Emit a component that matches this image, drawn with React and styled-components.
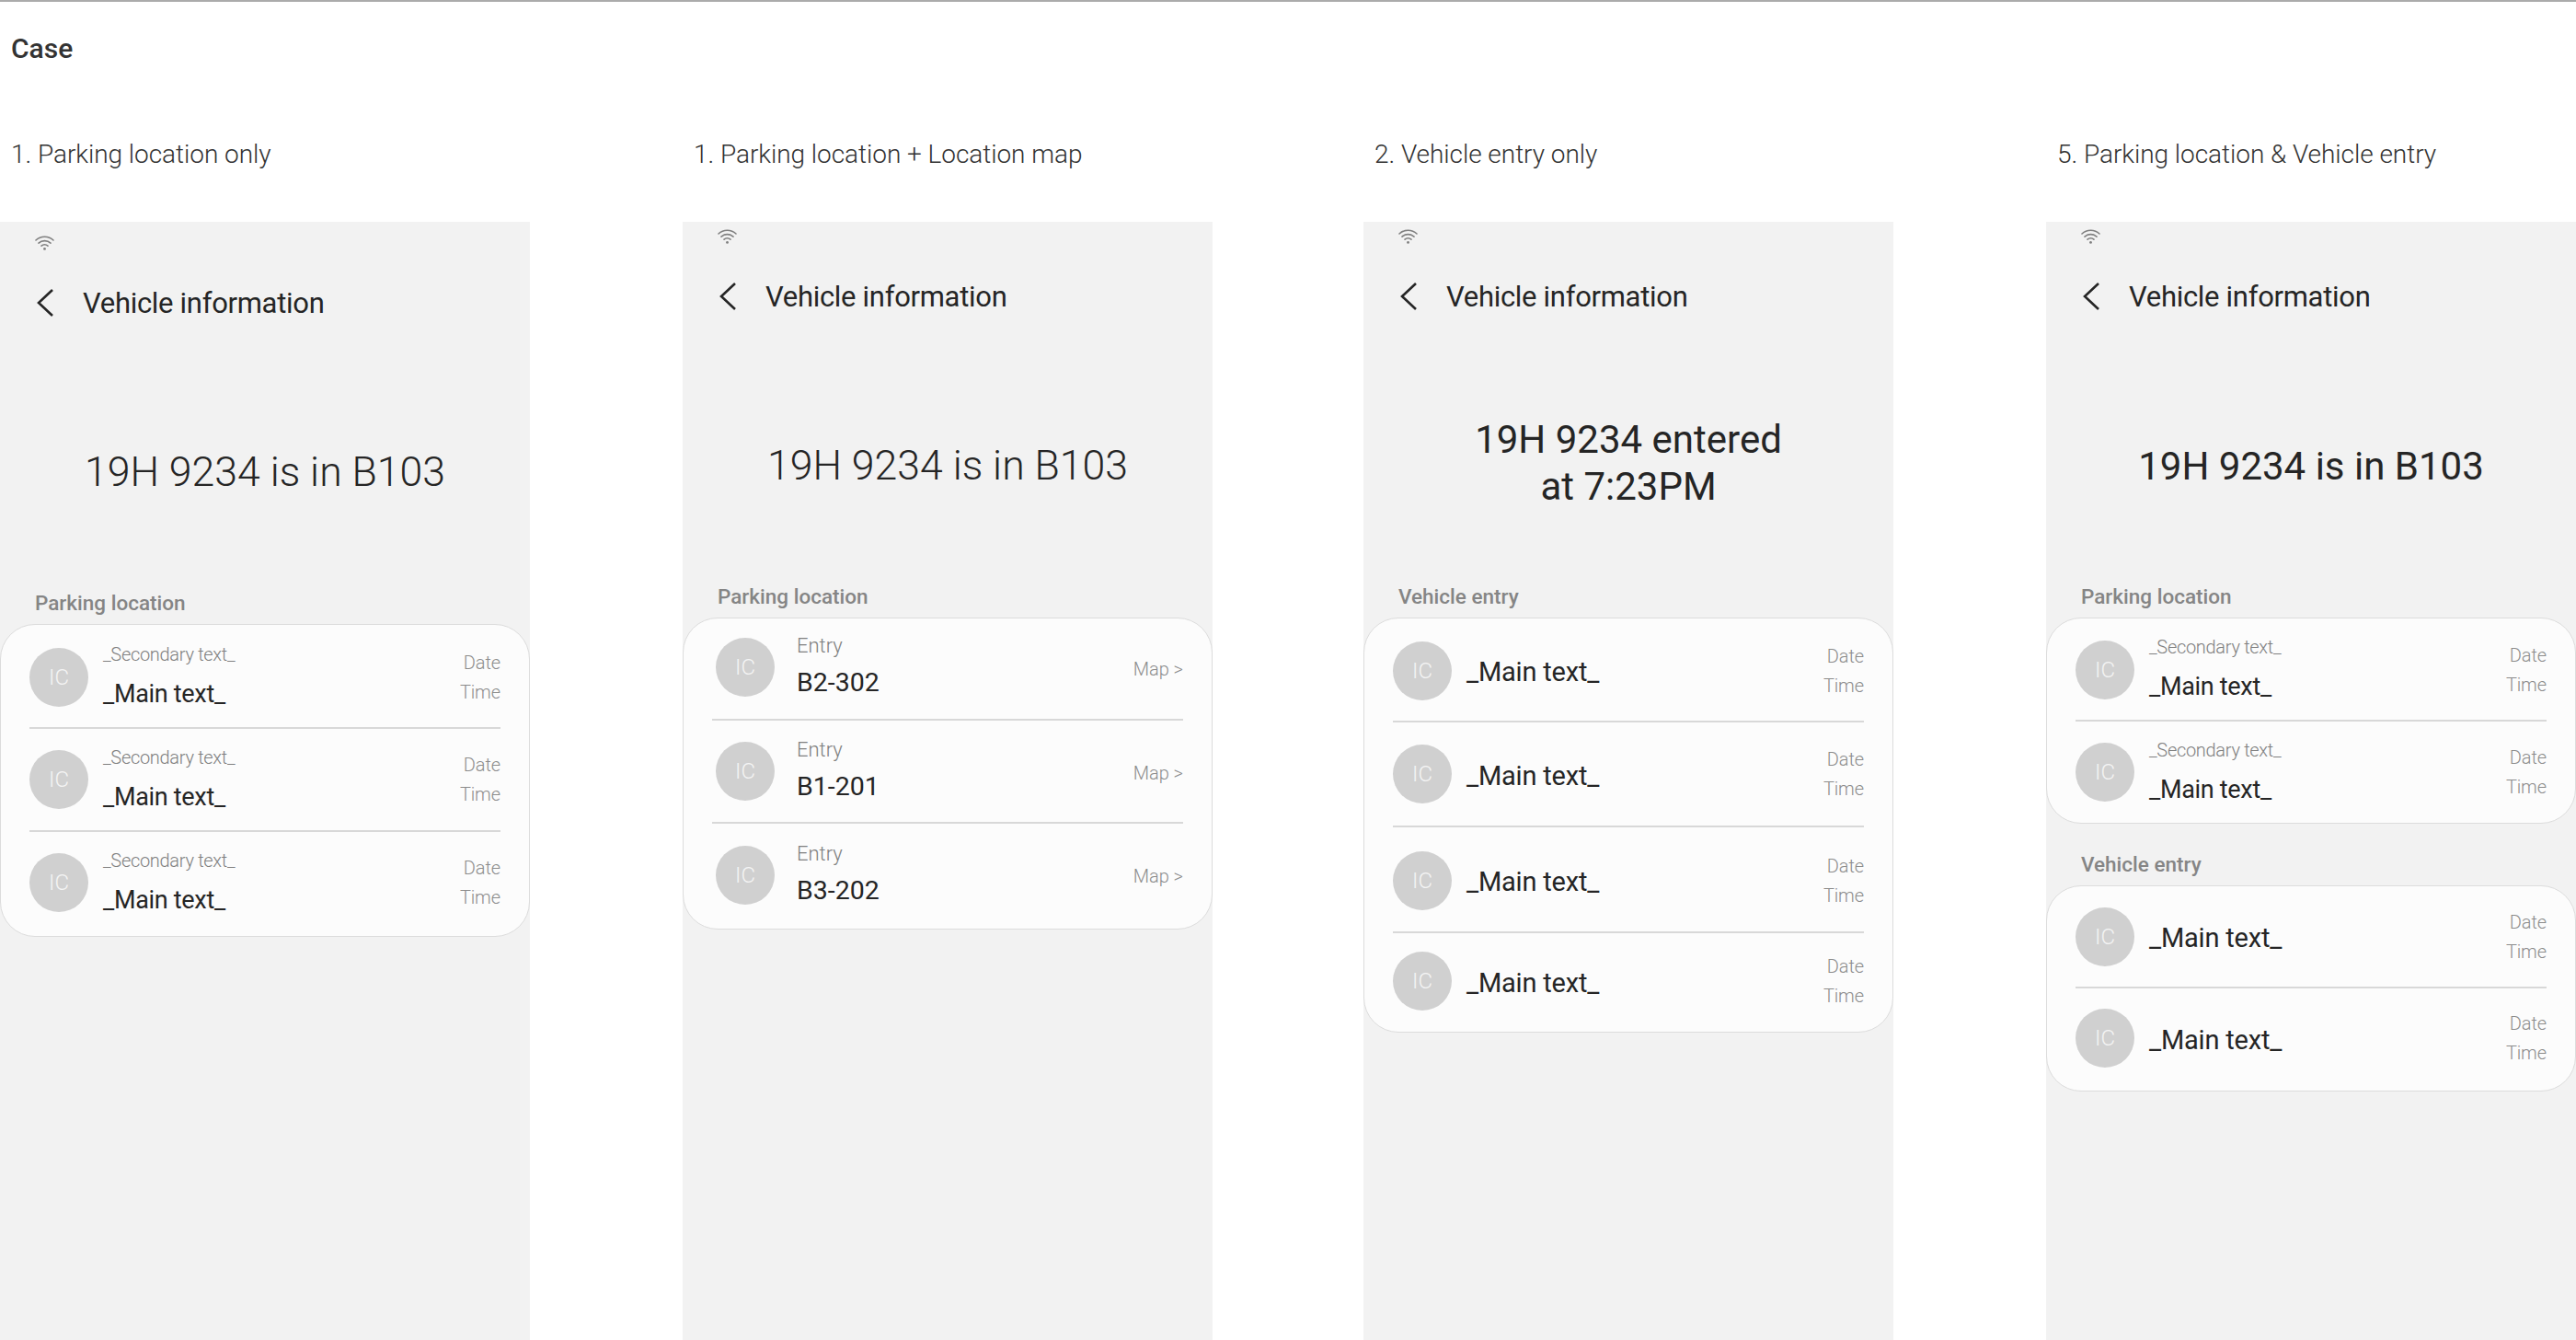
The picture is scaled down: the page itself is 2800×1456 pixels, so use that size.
import React from "react";
import styled, { createGlobalStyle } from "styled-components";

const GlobalStyle = createGlobalStyle`
  html, body {
    margin: 0;
    padding: 0;
    background: #fff;
    overflow: hidden;
  }
  * { box-sizing: border-box; }
`;

const WifiIcon = () => (
  <svg width="21" height="16" viewBox="0 0 21 16" fill="none" stroke="#808080" strokeWidth="1.6" strokeLinecap="round">
    <path d="M1 5C6.2 0 14.8 0 20 5" />
    <path d="M4 8.2C7.6 4.8 13.4 4.8 17 8.2" />
    <path d="M7 11.2C9 9.4 12 9.4 14 11.2" />
    <circle cx="10.5" cy="14.4" r="1.4" fill="#808080" stroke="none" />
  </svg>
);

const BackIcon = () => (
  <svg width="18" height="30" viewBox="0 0 18 30" fill="none" stroke="#252525" strokeWidth="2.6">
    <path d="M17 1L2 15L17 29" />
  </svg>
);

const Row = ({ wide, h, pad, icon = "IC", secondary, main, large, date = "Date", time = "Time", action }) => (
  <RowBox $wide={wide} $h={h} $pad={pad}>
    <Avatar>{icon}</Avatar>
    <RowText $large={large}>
      {secondary && <Secondary $wide={wide}>{secondary}</Secondary>}
      <MainText $large={large} $wide={wide}>{main}</MainText>
    </RowText>
    {action ? (
      <ActionLink>{action}</ActionLink>
    ) : (
      <Meta>
        <MetaLine>{date}</MetaLine>
        <MetaLine>{time}</MetaLine>
      </Meta>
    )}
  </RowBox>
);

const secondaryRow = { secondary: "_Secondary text_", main: "_Main text_" };
const largeRow = { main: "_Main text_", large: true };

const screens = [
  {
    label: "1. Parking location only",
    offset: 7,
    light: true,
    hero: ["19H 9234 is in B103"],
    sections: [
      { title: "Parking location", lead: 1, rows: [secondaryRow, secondaryRow, secondaryRow] },
    ],
  },
  {
    label: "1. Parking location + Location map",
    offset: 0,
    light: true,
    hero: ["19H 9234 is in B103"],
    sections: [
      {
        title: "Parking location",
        lead: 3,
        lift: 5,
        rows: [
          { main: "B2-302" },
          { main: "B1-201" },
          { main: "B3-202", h: 113 },
        ].map((row) => ({ ...row, wide: true, secondary: "Entry", action: "Map >" })),
      },
    ],
  },
  {
    label: "2. Vehicle entry only",
    offset: 0,
    hero: ["19H 9234 entered", "at 7:23PM"],
    sections: [
      {
        title: "Vehicle entry",
        lead: 1,
        rows: [
          largeRow,
          { ...largeRow, h: 114 },
          { ...largeRow, h: 115, pad: 2 },
          { ...largeRow, h: 106 },
        ],
      },
    ],
  },
  {
    label: "5. Parking location & Vehicle entry",
    offset: 0,
    hero: ["19H 9234 is in B103"],
    sections: [
      {
        title: "Parking location",
        lead: 2,
        lift: 1,
        rows: [secondaryRow, { ...secondaryRow, h: 109, pad: 3 }],
      },
      {
        title: "Vehicle entry",
        lead: 3,
        lift: 2,
        rows: [largeRow, { ...largeRow, h: 110 }],
      },
    ],
  },
];

export default function App() {
  return (
    <Page>
      <GlobalStyle />
      <TopLine />
      <PageTitle>Case</PageTitle>
      <Columns>
        {screens.map((screen) => (
          <Column key={screen.label}>
            <ColumnLabel>{screen.label}</ColumnLabel>
            <Phone $offset={screen.offset}>
              <StatusBar>
                <WifiIcon />
              </StatusBar>
              <Header>
                <BackIcon />
                <HeaderTitle>Vehicle information</HeaderTitle>
              </Header>
              <Hero $light={screen.light} $lines={screen.hero.length}>
                {screen.hero.map((line) => (
                  <div key={line}>{line}</div>
                ))}
              </Hero>
              {screen.sections.map((section) => (
                <Section key={section.title}>
                  <SectionLabel>{section.title}</SectionLabel>
                  <Card $lead={section.lead} $lift={section.lift}>
                    {section.rows.map((row, i) => (
                      <Row key={i} {...row} />
                    ))}
                  </Card>
                </Section>
              ))}
            </Phone>
          </Column>
        ))}
      </Columns>
    </Page>
  );
}

const Page = styled.div`
  width: 2800px;
  height: 1456px;
  overflow: hidden;
  background: #fff;
  font-family: Roboto, "Liberation Sans", sans-serif;
  color: #252525;
`;

const TopLine = styled.div`
  height: 2px;
  background: #ababab;
`;

const PageTitle = styled.div`
  margin-top: 31px;
  padding-left: 12px;
  font-size: 30px;
  line-height: 40px;
  font-weight: 500;
  color: #333;
`;

const Columns = styled.div`
  display: grid;
  grid-template-columns: 742px 740px 742px 576px;
  margin-top: 75px;
`;

const Column = styled.div`
  width: 576px;
`;

const ColumnLabel = styled.div`
  padding-left: 12px;
  font-size: 28px;
  line-height: 40px;
  font-weight: 300;
  letter-spacing: -0.05px;
  color: #333;
  margin-bottom: 53px;
`;

const Phone = styled.div`
  height: 1215px;
  padding-top: ${({ $offset }) => $offset}px;
  background: #f2f2f2;
`;

const StatusBar = styled.div`
  height: 48px;
  padding: 8px 0 0 38px;
  display: flex;
  align-items: flex-start;
`;

const Header = styled.div`
  height: 64px;
  padding: 2px 0 0 40px;
  display: flex;
  align-items: center;
  gap: 32px;
`;

const HeaderTitle = styled.div`
  font-size: 31px;
  letter-spacing: -0.3px;
  color: #252525;
`;

const Hero = styled.div`
  height: 280px;
  padding: 26px 0 ${({ $lines }) => ($lines > 1 ? 7 : 0)}px;
  display: flex;
  flex-direction: column;
  justify-content: center;
  text-align: center;
  font-size: ${({ $light }) => ($light ? 44.6 : 42)}px;
  font-weight: ${({ $light }) => ($light ? 300 : 400)};
  line-height: 51px;
  color: #252525;
`;

const Section = styled.div`
  & + & {
    margin-top: 29px;
  }
`;

const SectionLabel = styled.div`
  padding-left: 38px;
  font-size: 22.5px;
  line-height: 30px;
  font-weight: 500;
  color: #858585;
  margin-bottom: 8px;
`;

const Card = styled.div`
  border: 1px solid #dcdcdc;
  border-radius: 38px;
  background: #fcfcfc;
  padding-bottom: 3px;

  & > :first-child {
    height: ${({ $lead }) => 112 - $lead}px;
    border-top-color: transparent;
    padding-bottom: ${({ $lift }) => $lift || 0}px;
  }
`;

const RowBox = styled.div`
  height: ${({ $h }) => $h || 112}px;
  margin: 0 31px;
  padding-left: ${({ $wide }) => ($wide ? 4 : 0)}px;
  padding-top: ${({ $pad }) => $pad || 0}px;
  border-top: 2px solid #d8d8d8;
  display: flex;
  align-items: center;
  gap: ${({ $wide }) => ($wide ? 24 : 16)}px;
`;

const Avatar = styled.div`
  width: 64px;
  height: 64px;
  flex-shrink: 0;
  border-radius: 50%;
  background: #d0d0d0;
  color: #f4f4f4;
  font-size: 24px;
  font-weight: 300;
  display: flex;
  align-items: center;
  justify-content: center;
`;

const RowText = styled.div`
  flex: 1;
  display: flex;
  flex-direction: column;
  padding-top: ${({ $large }) => ($large ? 3 : 0)}px;
  padding-bottom: ${({ $large }) => ($large ? 0 : 3)}px;
`;

const Secondary = styled.div`
  font-size: ${({ $wide }) => ($wide ? 22 : 20)}px;
  letter-spacing: ${({ $wide }) => ($wide ? 0 : -0.3)}px;
  line-height: 28px;
  font-weight: 300;
  color: #808080;
  margin-bottom: ${({ $wide }) => ($wide ? 9 : 12)}px;
`;

const MainText = styled.div`
  font-size: ${({ $large, $wide }) => ($large ? 29 : $wide ? 28.5 : 27)}px;
  letter-spacing: ${({ $large, $wide }) => ($large ? -0.2 : $wide ? 0 : -0.3)}px;
  line-height: 34px;
  color: #252525;
`;

const Meta = styled.div`
  display: flex;
  flex-direction: column;
  align-items: flex-end;
`;

const MetaLine = styled.div`
  font-size: 20px;
  line-height: 32px;
  font-weight: 300;
  letter-spacing: -0.1px;
  color: #8c8c8c;
`;

const ActionLink = styled.div`
  font-size: 20px;
  font-weight: 300;
  color: #8c8c8c;
  padding-top: 3px;
`;
